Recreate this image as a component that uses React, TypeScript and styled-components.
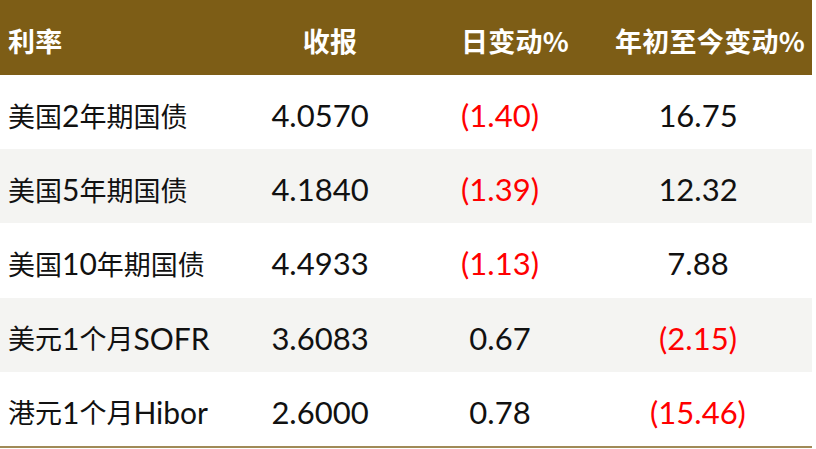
import { createGlobalStyle } from 'styled-components';
import styled from 'styled-components';

const GlobalStyle = createGlobalStyle`
  html, body {
    margin: 0;
    padding: 0;
    background: #ffffff;
  }
  body {
    font-family: Lato, "Noto Sans CJK SC", sans-serif;
  }
`;

/**  整张表格  */
const Table = styled.div`
  width: 812px;
  display: grid;
  grid-template-columns: 240px 160px 200px 212px;
  grid-template-rows: 75px repeat(5, 74.2px);
  border-bottom: 2px solid #a08a57;
`;

const HeadRow = styled.div`
  display: contents;
`;

const HeadCell = styled.div<{ $align: 'left' | 'center'; $shift: number }>`
  background: #7d5d16;
  color: #ffffff;
  font-family: "Noto Sans CJK SC", Lato, sans-serif;
  font-weight: 700;
  font-size: 27px;
  letter-spacing: 0.3px;
  display: flex;
  align-items: center;
  justify-content: ${p => (p.$align === 'left' ? 'flex-start' : 'center')};
  padding-top: 6px;
  padding-left: ${p => p.$shift}px;
  box-sizing: border-box;
`;

const Row = styled.div<{ $striped: boolean }>`
  display: contents;
  --row-bg: ${p => (p.$striped ? '#f4f4f2' : '#ffffff')};
`;

const NameCell = styled.div`
  background: var(--row-bg);
  display: flex;
  align-items: center;
  padding: 6px 0 0 8px;
  box-sizing: border-box;
  font-family: "Noto Sans CJK SC", sans-serif;
  font-size: 27px;
  color: #111111;
  white-space: nowrap;
`;

const Latin = styled.span`
  font-family: Lato, sans-serif;
  font-size: 30px;
`;

const NumCell = styled.div<{ $negative?: boolean; $shift: number }>`
  background: var(--row-bg);
  display: flex;
  align-items: center;
  justify-content: center;
  padding-top: 6px;
  padding-right: ${p => p.$shift}px;
  box-sizing: border-box;
  font-family: Lato, sans-serif;
  font-size: 31px;
  color: ${p => (p.$negative ? '#ff0000' : '#111111')};
`;

/**  名称里的中文与拉丁字符分开渲染，数字用拉丁字体  */
function Name({ text }: { text: string }) {
  const parts = text.split(/([A-Za-z0-9]+)/).filter(Boolean);
  return (
    <NameCell>
      {parts.map((p, i) => (/[A-Za-z0-9]/.test(p) ? <Latin key={i}>{p}</Latin> : <span key={i}>{p}</span>))}
    </NameCell>
  );
}

function fmt(v: number, digits: number) {
  return v < 0 ? `(${Math.abs(v).toFixed(digits)})` : v.toFixed(digits);
}

const heads: [string, 'left' | 'center', number][] = [
  ['利率', 'left', 8],
  ['收报', 'center', 20],
  ['日变动%', 'center', 30],
  ['年初至今变动%', 'center', 8],
];

const rows: [string, number, number, number][] = [
  ['美国2年期国债', 4.057, -1.4, 16.75],
  ['美国5年期国债', 4.184, -1.39, 12.32],
  ['美国10年期国债', 4.4933, -1.13, 7.88],
  ['美元1个月SOFR', 3.6083, 0.67, -2.15],
  ['港元1个月Hibor', 2.6, 0.78, -15.46],
];

export default function App() {
  return (
    <>
      <GlobalStyle />
      <Table>
        <HeadRow>
          {heads.map(h => (
            <HeadCell key={h[0]} $align={h[1]} $shift={h[2]}>
              {h[0]}
            </HeadCell>
          ))}
        </HeadRow>
        {rows.map((r, i) => (
          <Row key={r[0]} $striped={i % 2 === 1}>
            <Name text={r[0]} />
            <NumCell $shift={0}>{r[1].toFixed(4)}</NumCell>
            <NumCell $shift={0} $negative={r[2] < 0}>
              {fmt(r[2], 2)}
            </NumCell>
            <NumCell $shift={16} $negative={r[3] < 0}>
              {fmt(r[3], 2)}
            </NumCell>
          </Row>
        ))}
      </Table>
    </>
  );
}
